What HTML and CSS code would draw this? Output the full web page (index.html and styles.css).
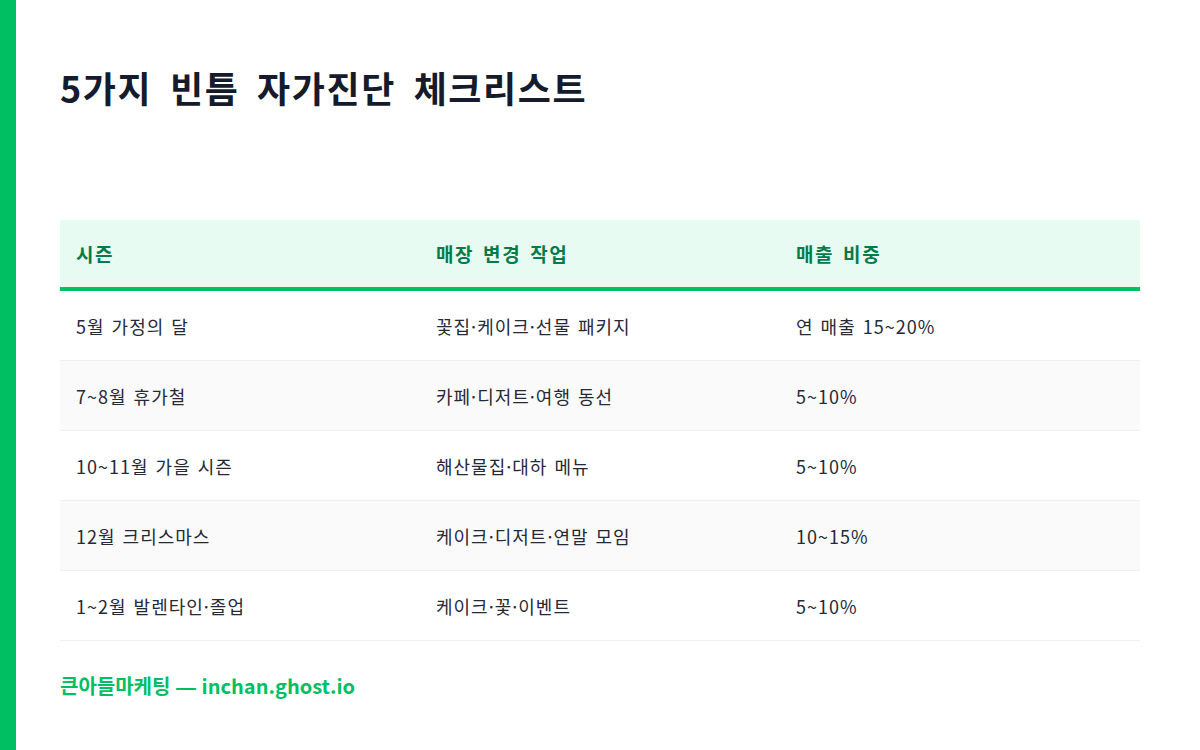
FILE: index.html
```html
<!DOCTYPE html>
<html lang="ko">
<head>
<meta charset="utf-8">
<link rel="stylesheet" href="styles.css">
</head>
<body>
<div class="page">
  <div class="accent"></div>
  <main class="content">
    <h1 class="title">5가지 빈틈 자가진단 체크리스트</h1>
    <table class="table">
      <thead>
        <tr><th>시즌</th><th>매장 변경 작업</th><th>매출 비중</th></tr>
      </thead>
      <tbody>
        <tr><td>5월 가정의 달</td><td>꽃집·케이크·선물 패키지</td><td>연 매출 15~20%</td></tr>
        <tr><td>7~8월 휴가철</td><td>카페·디저트·여행 동선</td><td>5~10%</td></tr>
        <tr><td>10~11월 가을 시즌</td><td>해산물집·대하 메뉴</td><td>5~10%</td></tr>
        <tr><td>12월 크리스마스</td><td>케이크·디저트·연말 모임</td><td>10~15%</td></tr>
        <tr><td>1~2월 발렌타인·졸업</td><td>케이크·꽃·이벤트</td><td>5~10%</td></tr>
      </tbody>
    </table>
    <p class="footer">큰아들마케팅 <span class="dash">—</span> inchan.ghost.io</p>
  </main>
</div>
</body>
</html>
```
FILE: styles.css
```css
html, body {
  margin: 0;
  padding: 0;
  background: #ffffff;
}
body {
  font-family: "Noto Sans CJK KR", "Noto Sans", sans-serif;
  color: #1f2330;
}
.page {
  display: flex;
  width: 1200px;
  height: 750px;
}
.accent {
  width: 16px;
  flex: none;
  background: #00bf63;
}
.content {
  flex: 1;
  padding: 0 44px 0 44px;
}
.title {
  margin: 58px 0 0 0;
  font-size: 36px;
  line-height: 58px;
  font-weight: 700;
  color: #161b2b;
  letter-spacing: 1.6px;
  word-spacing: 6px;
}
.table {
  margin-top: 104px;
  width: 1080px;
  border-collapse: collapse;
  table-layout: fixed;
}
.table th {
  background: #e8fbf2;
  color: #067a4a;
  font-size: 19px;
  font-weight: 700;
  text-align: left;
  padding: 0 16px;
  height: 67px;
  border-bottom: 4px solid #00bf63;
  letter-spacing: 1.6px;
  word-spacing: 2px;
}
.table td {
  font-size: 18px;
  font-weight: 400;
  color: #262a36;
  padding: 0 16px;
  height: 69px;
  border-bottom: 1px solid #efefef;
  letter-spacing: 1px;
  word-spacing: 1px;
}
.table tbody tr:nth-child(even) td {
  background: #fafafa;
}
.footer {
  margin: 30px 0 0 0;
  font-size: 20px;
  font-weight: 700;
  color: #00bf63;
  line-height: 30px;
}
.dash {
  font-family: "Liberation Sans", sans-serif;
  font-weight: 700;
}
```
